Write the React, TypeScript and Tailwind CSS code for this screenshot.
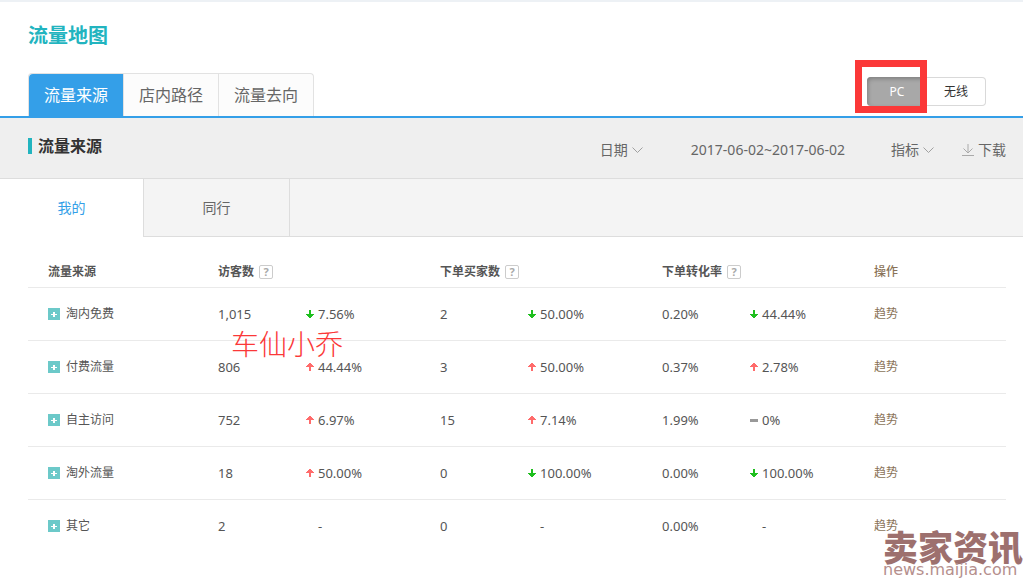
import { useState } from "react";
import clsx from "clsx";

type Trend = "up" | "down" | "flat" | "none";

interface Metric {
    value: string;
    change: string;
    trend: Trend;
}

interface Source {
    name: string;
    metrics: Metric[];
}

const mainTabs = ["流量来源", "店内路径", "流量去向"];
const scopeTabs = ["我的", "同行"];
const metricNames = ["访客数", "下单买家数", "下单转化率"];

const sources: Source[] = [
    {
        name: "淘内免费",
        metrics: [
            { value: "1,015", change: "7.56%", trend: "down" },
            { value: "2", change: "50.00%", trend: "down" },
            { value: "0.20%", change: "44.44%", trend: "down" }
        ]
    },
    {
        name: "付费流量",
        metrics: [
            { value: "806", change: "44.44%", trend: "up" },
            { value: "3", change: "50.00%", trend: "up" },
            { value: "0.37%", change: "2.78%", trend: "up" }
        ]
    },
    {
        name: "自主访问",
        metrics: [
            { value: "752", change: "6.97%", trend: "up" },
            { value: "15", change: "7.14%", trend: "up" },
            { value: "1.99%", change: "0%", trend: "flat" }
        ]
    },
    {
        name: "淘外流量",
        metrics: [
            { value: "18", change: "50.00%", trend: "up" },
            { value: "0", change: "100.00%", trend: "down" },
            { value: "0.00%", change: "100.00%", trend: "down" }
        ]
    },
    {
        name: "其它",
        metrics: [
            { value: "2", change: "-", trend: "none" },
            { value: "0", change: "-", trend: "none" },
            { value: "0.00%", change: "-", trend: "none" }
        ]
    }
];

function TrendIcon({ trend }: { trend: Trend }) {
    return (
        <svg width="8" height="8" viewBox="0 0 8 8" shapeRendering="crispEdges" className="shrink-0" aria-hidden="true">
            {trend === "down" && <path d="M3 0h2v4h3v1H7v1H6v1H5v1H3V7H2V6H1V5H0V4h3z" fill="#1fbf1f" />}
            {trend === "up" && <path d="M3 8h2V4h3V3H7V2H6V1H5V0H3v1H2v1H1v1H0v1h3z" fill="#ff6b6b" />}
            {trend === "flat" && <path d="M0 3h8v3H0z" fill="#999" />}
        </svg>
    );
}

function Chevron() {
    return (
        <svg width="11" height="6" viewBox="0 0 11 6" fill="none" stroke="#a0a0a0" aria-hidden="true">
            <path d="M.5.5l5 5 5-5" />
        </svg>
    );
}

function MetricCells({ metric }: { metric: Metric }) {
    return (
        <>
            <td className="p-0">{metric.value}</td>
            <td className="p-0">
                <span className="flex items-center gap-1">
                    <TrendIcon trend={metric.trend} />
                    {metric.change}
                </span>
            </td>
        </>
    );
}

export default function App() {
    const [mainTab, setMainTab] = useState(0);
    const [scope, setScope] = useState(0);

    return (
        <div className="relative min-h-screen overflow-hidden border-t-2 border-[#edf1f5] bg-white font-['Noto_Sans','Noto_Sans_CJK_SC',sans-serif] text-[#555]">
            <header className="pt-5 pr-[37px] pl-7">
                <h1 className="text-xl leading-7 font-bold text-[#22b4bf]">流量地图</h1>
                <div className="mt-[23px] flex items-start justify-between">
                    <nav className="flex rounded-t border border-b-0 border-[#e2e2e2] bg-[#fcfcfc]">
                        {mainTabs.map((tab, index) => (
                            <button
                                key={tab}
                                onClick={() => setMainTab(index)}
                                className={clsx(
                                    "h-[42px] px-[15px] text-base",
                                    index > 0 && "border-l border-[#e2e2e2]",
                                    index === mainTab ? "rounded-tl bg-[#349fe8] text-white" : "text-[#666]"
                                )}
                            >
                                {tab}
                            </button>
                        ))}
                    </nav>
                    <div className="relative mt-1 flex text-xs">
                        <button className="h-[29px] w-[60px] rounded-l-sm bg-[#a8a8a8] text-white shadow-[inset_1px_2px_4px_#808080]">PC</button>
                        <button className="h-[29px] w-[59px] rounded-r-sm border border-l-0 border-[#d9d9d9] bg-white text-[#333]">无线</button>
                        <div className="pointer-events-none absolute -top-[17px] -left-3 h-[53px] w-[72px] border-7 border-[#fb3838]" />
                    </div>
                </div>
            </header>

            <section className="flex items-center justify-between border-t-2 border-b border-t-[#349fe8] border-b-[#ddd] bg-[#efefef] pt-4 pr-[17px] pb-4 pl-7">
                <h2 className="mb-1 flex items-center gap-1.5 text-base leading-6 font-bold text-[#333]">
                    <span className="h-4 w-1 bg-[#22b4bf]" />
                    流量来源
                </h2>
                <div className="flex items-center pt-1 text-sm leading-6 text-[#666]">
                    <button className="flex items-center gap-1">
                        日期
                        <Chevron />
                    </button>
                    <span className="ml-12">2017-06-02~2017-06-02</span>
                    <button className="ml-[46px] flex items-center gap-1">
                        指标
                        <Chevron />
                    </button>
                    <a href="#download" className="ml-7 flex items-center gap-1">
                        <svg width="12" height="12" viewBox="0 0 12 12" fill="none" stroke="#aaa" aria-hidden="true">
                            <path d="M6 0v9M1.500 4.500L6 9l4.500-4.500M0 11.500h12" />
                        </svg>
                        下载
                    </a>
                </div>
            </section>

            <div className="flex border-b border-[#ddd] bg-[#f4f4f4] text-sm">
                {scopeTabs.map((tab, index) => (
                    <button
                        key={tab}
                        onClick={() => setScope(index)}
                        className={clsx(
                            index === 0 ? "w-[143px]" : "w-[147px] border-x border-[#ddd]",
                            index === scope ? "-mb-px h-[58px] bg-white text-[#349fe8]" : "h-[57px] text-[#666]"
                        )}
                    >
                        {tab}
                    </button>
                ))}
            </div>

            <main className="relative pt-5 pr-[17px] pl-7">
                <table className="w-full table-fixed border-collapse text-left text-[13px] leading-5">
                    <colgroup>
                        <col className="w-[190px]" />
                        <col className="w-[88px]" />
                        <col className="w-[134px]" />
                        <col className="w-[88px]" />
                        <col className="w-[134px]" />
                        <col className="w-[88px]" />
                        <col className="w-[124px]" />
                        <col className="w-[132px]" />
                    </colgroup>
                    <thead>
                        <tr className="h-[30px] border-b border-[#eaeaea] text-xs">
                            <th className="p-0 pl-5">流量来源</th>
                            {metricNames.map((name) => (
                                <th key={name} colSpan={2} className="p-0">
                                    <span className="flex items-center gap-[5px]">
                                        {name}
                                        <button
                                            aria-label={`${name}说明`}
                                            className="flex h-3.5 w-3.5 items-center justify-center rounded-xs border border-[#ccc] text-[11px] leading-3 text-[#aaa]"
                                        >
                                            ?
                                        </button>
                                    </span>
                                </th>
                            ))}
                            <th className="p-0 font-medium text-[#8a7358]">操作</th>
                        </tr>
                    </thead>
                    <tbody>
                        {sources.map((source) => (
                            <tr key={source.name} className="h-[53px] border-b border-[#eaeaea] last:border-b-0">
                                <td className="p-0 pl-5">
                                    <span className="flex items-center gap-1.5 text-xs">
                                        <button aria-label={`展开${source.name}`} className="h-3 w-3 bg-[#6cc9c9]">
                                            <svg width="12" height="12" viewBox="0 0 12 12" shapeRendering="crispEdges" aria-hidden="true">
                                                <path d="M3 6h6v1H3zM5 4h2v5H5z" fill="#fff" />
                                            </svg>
                                        </button>
                                        {source.name}
                                    </span>
                                </td>
                                {source.metrics.map((metric, index) => (
                                    <MetricCells key={index} metric={metric} />
                                ))}
                                <td className="p-0 text-xs">
                                    <a href="#trend" className="text-[#8a7358]">趋势</a>
                                </td>
                            </tr>
                        ))}
                    </tbody>
                </table>
                <p className="pointer-events-none absolute top-[88px] left-[231px] font-['Noto_Sans_CJK_SC',sans-serif] text-[28px] leading-9 font-light text-[#fb3838]">
                    车仙小乔
                </p>
            </main>

            <div className="pointer-events-none absolute right-0 bottom-0 flex flex-col text-[#9d706e]">
                <span className="font-['Noto_Sans_CJK_SC',sans-serif] text-[35px] leading-8 font-black">卖家资讯</span>
                <span className="font-['DejaVu_Sans',sans-serif] text-base leading-4 text-[#b58f8d]">news.maijia.com</span>
            </div>
        </div>
    );
}
